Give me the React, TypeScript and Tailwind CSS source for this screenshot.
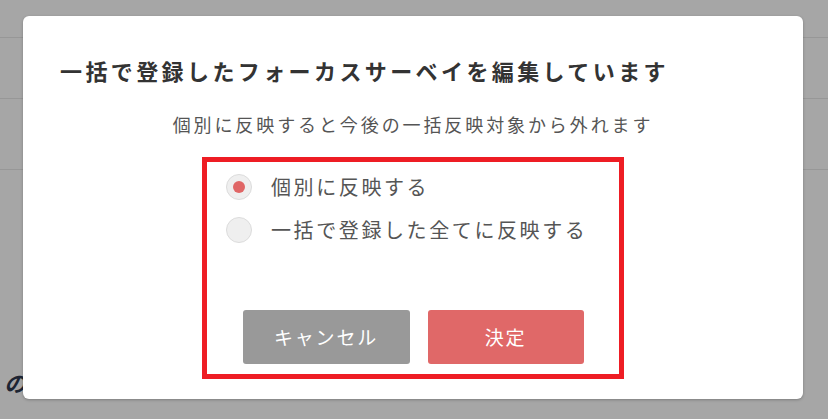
import React, { useState } from "react"

const jp = { fontFamily: '"Noto Sans CJK JP", "Noto Sans", sans-serif' }

const options = ["個別に反映する", "一括で登録した全てに反映する"]

function Radio({ checked }: { checked: boolean }) {
  return (
    <span className="flex h-[26px] w-[26px] shrink-0 items-center justify-center rounded-full border border-[#dcdcdc] bg-[#efefef]">
      {checked && <span className="h-[12px] w-[12px] rounded-full bg-[#e06666]" />}
    </span>
  )
}

export default function App() {
  const [selected, setSelected] = useState(0)

  return (
    <div className="relative h-[419px] w-[828px] overflow-hidden bg-[#a6a6a6]" style={jp}>
      {/* page behind the overlay */}
      <div className="h-[38px] border-b border-[#979797]" />
      <div className="h-[61px] border-b border-[#979797]" />
      <div className="h-[71px] border-b border-[#979797]" />
      <div className="flex h-[249px] items-end pb-[24px] pl-[4px]">
        <span className="text-[22px] font-bold italic leading-[26px] text-[#1d2533]">の</span>
      </div>

      {/* modal */}
      <div className="absolute left-[23px] top-[16px] w-[780px] rounded-md bg-white pt-[38px] pb-[20px] shadow-[0_1px_3px_rgba(0,0,0,0.25)]">
        <h2 className="pl-[37px] text-[22px] font-bold leading-[32px] tracking-[3.4px] text-[#333]">
          一括で登録したフォーカスサーベイを編集しています
        </h2>
        <p className="mt-[25px] text-center text-[18px] leading-[26px] tracking-[2.9px] text-[#555]">
          個別に反映すると今後の一括反映対象から外れます
        </p>

        <div className="mx-auto mt-[20px] h-[222px] w-[422px] border-[5px] border-[#ee1d24] pt-[12px] pb-[10px]">
          <div className="flex flex-col gap-[17px] pl-[19px]">
            {options.map((label, i) => (
              <label key={label} className="flex cursor-pointer items-center gap-[19px]" onClick={() => setSelected(i)}>
                <Radio checked={selected === i} />
                <span className="text-[20px] leading-[26px] tracking-[2.6px] text-[#555]">{label}</span>
              </label>
            ))}
          </div>

          <div className="mt-[67px] flex justify-center gap-[18px]">
            <button className="h-[54px] w-[167px] rounded-[3px] bg-[#999] text-[19px] tracking-[1.8px] text-white">
              キャンセル
            </button>
            <button className="h-[54px] w-[156px] rounded-[3px] bg-[#e06868] text-[19px] tracking-[1.8px] text-white">
              決定
            </button>
          </div>
        </div>
      </div>
    </div>
  )
}
